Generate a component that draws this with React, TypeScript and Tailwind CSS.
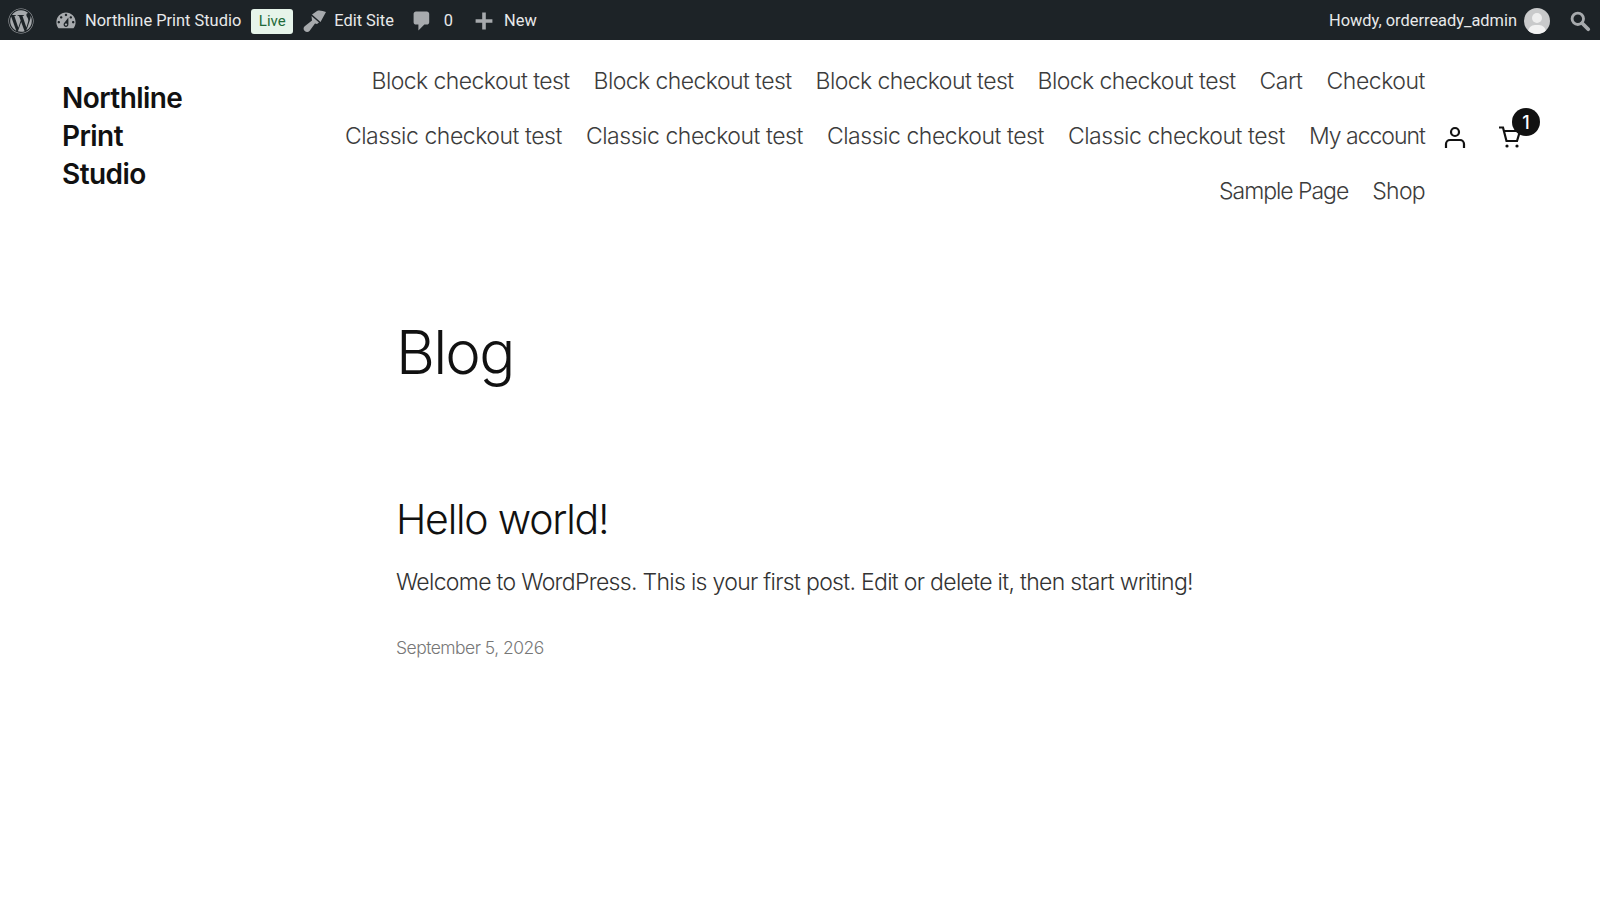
import { FaWordpress } from "react-icons/fa";

const navLinks = [
  { label: "Block checkout test", cls: "tracking-[-0.025em]" },
  { label: "Block checkout test", cls: "tracking-[-0.025em]" },
  { label: "Block checkout test", cls: "tracking-[-0.025em]" },
  { label: "Block checkout test", cls: "tracking-[-0.025em]" },
  { label: "Cart", cls: "tracking-[-0.02em]" },
  { label: "Checkout", cls: "tracking-[-0.02em]" },
  { label: "Classic checkout test", cls: "tracking-[-0.02em]" },
  { label: "Classic checkout test", cls: "tracking-[-0.02em]" },
  { label: "Classic checkout test", cls: "tracking-[-0.02em]" },
  { label: "Classic checkout test", cls: "tracking-[-0.02em]" },
  { label: "My account", cls: "tracking-[-0.043em]" },
  { label: "Sample Page", cls: "tracking-[-0.045em]" },
  { label: "Shop", cls: "tracking-[-0.03em]" },
];

const AdminBar = () => (
  <div className="flex h-10 items-center justify-between bg-[#1d2327] pt-[2px] font-['Roboto',sans-serif] text-[16.4px] text-[#e8e9ea]">
    <div className="flex items-center">
      <FaWordpress className="ml-2 h-[26px] w-[26px] text-[#a7aaad]" />
      <svg viewBox="0 0 20 20" className="ml-5 h-6 w-6 fill-[#a7aaad]">
        <path
          fillRule="evenodd"
          d="M3.76 16h12.48c1.1-1.37 1.76-3.11 1.76-5 0-4.42-3.58-8-8-8s-8 3.58-8 8c0 1.89.66 3.63 1.76 5zM10 4c.55 0 1 .45 1 1s-.45 1-1 1-1-.45-1-1 .45-1 1-1zM6 6c.55 0 1 .45 1 1s-.45 1-1 1-1-.45-1-1 .45-1 1-1zm8 0c.55 0 1 .45 1 1s-.45 1-1 1-1-.45-1-1 .45-1 1-1zm-5.37 5.55L12 7v6c0 1.1-.9 2-2 2s-2-.9-2-2c0-.57.24-1.08.63-1.45zM4 10c.55 0 1 .45 1 1s-.45 1-1 1-1-.45-1-1 .45-1 1-1zm12 0c.55 0 1 .45 1 1s-.45 1-1 1-1-.45-1-1 .45-1 1-1zm-5 3c0-.55-.45-1-1-1s-1 .45-1 1 .45 1 1 1 1-.45 1-1z"
        />
      </svg>
      <span className="ml-[7px]">Northline Print Studio</span>
      <span className="ml-[10px] flex h-[25px] w-[42px] items-center justify-center rounded-[3px] bg-[#e6f4ea] text-[15px] text-[#1e6b3a]">
        Live
      </span>
      {/* brush */}
      <svg viewBox="0 0 24 24" className="ml-[9px] h-6 w-6 fill-[#a7aaad]">
        <path d="M10 5.500 15 2c3-1.200 6 .4 9 1l-5.500 10z" />
        <path d="M9.500 7 17 13.500l-2 1.500-2-.5-5.500 7.500c-1.500 1.500-3.500 1.200-5-.2-1.200-1.400-1.300-3.300.2-4.500L10 11.500z" />
      </svg>
      <span className="ml-2">Edit Site</span>
      <svg viewBox="0 0 20 20" className="ml-[16px] h-6 w-6 fill-[#a7aaad]">
        <path d="M5 2h9c1.100 0 2 .9 2 2v7c0 1.100-.9 2-2 2h-2l-5 5v-5H5c-1.100 0-2-.9-2-2V4c0-1.100.9-2 2-2z" />
      </svg>
      <span className="ml-[10px]">0</span>
      <svg viewBox="0 0 20 20" className="ml-[19px] h-6 w-6 fill-[#a7aaad]">
        <path d="M17 8.500v3h-5.500V17h-3v-5.500H3v-3h5.500V3h3v5.500z" />
      </svg>
      <span className="ml-2">New</span>
    </div>
    <div className="flex items-center">
      <span>Howdy, orderready_admin</span>
      <span className="relative ml-[7px] h-[26px] w-[26px] overflow-hidden rounded-full bg-[#c9cacb]">
        <span className="absolute left-[8px] top-[5px] h-[10px] w-[10px] rounded-full bg-[#eeeeee]" />
        <span className="absolute left-[4px] top-[17px] h-[14px] w-[18px] rounded-full bg-[#f2f2f2]" />
      </span>
      <svg viewBox="0 0 20 20" className="ml-[19px] mr-[9px] h-[22px] w-[22px] fill-none stroke-[#a7aaad]">
        <circle cx="8" cy="8" r="5.200" strokeWidth="2.600" />
        <path d="m12 12 5.500 5.500" strokeWidth="3.400" strokeLinecap="round" />
      </svg>
    </div>
  </div>
);

const Header = () => (
  <header className="flex items-start pl-[62px] pt-[14px] font-['Inter',sans-serif]">
    <div className="mt-[25px] w-[130px] text-[28px] font-semibold leading-[38px] tracking-[-0.02em] text-[#111]">
      Northline Print Studio
    </div>
    <nav className="ml-[133px] flex w-[1100px] flex-wrap justify-end gap-x-[24px] text-[23px] font-light text-[#3c3c3c]">
      {navLinks.map((link, i) => (
        <a key={i} className={`flex h-[55px] items-center ${link.cls}`}>
          {link.label}
        </a>
      ))}
    </nav>
    <div className="relative ml-[18px] mt-[55px] flex h-[55px] items-center text-[#111]">
      <svg viewBox="0 0 24 24" className="h-6 w-6 fill-none stroke-current" strokeWidth={2.200}>
        <circle cx="12" cy="7" r="4" />
        <path d="M3 23v-4a4 4 0 0 1 4-4h10a4 4 0 0 1 4 4v4" />
      </svg>
      <svg viewBox="0 0 24 24" className="ml-[31px] h-6 w-6 fill-none stroke-current" strokeWidth={2.200}>
        <path d="M1 2.500h4l3.500 13.500H19l3-10H6" />
        <circle cx="9" cy="21" r="1.600" className="fill-current stroke-none" />
        <circle cx="19" cy="21" r="1.600" className="fill-current stroke-none" />
      </svg>
      <span className="absolute left-[69px] top-[-1px] flex h-7 w-7 items-center justify-center rounded-full bg-[#111] text-[18px] font-medium text-white">
        1
      </span>
    </div>
  </header>
);

export default function App() {
  return (
    <div className="min-h-[900px] bg-white">
      <AdminBar />
      <Header />
      <main className="ml-[396px] w-[806px] pt-[99px] font-['Inter',sans-serif]">
        <h1 className="text-[60px] font-light leading-[68px] tracking-[-0.03em] text-[#111]">Blog</h1>
        <h2 className="mt-[109px] text-[41px] font-light leading-[48px] tracking-[-0.03em] text-[#111]">
          Hello world!
        </h2>
        <p className="mt-[23px] text-[23px] font-light leading-[32px] tracking-[-0.03em] text-[#333]">
          Welcome to WordPress. This is your first post. Edit or delete it, then start writing!
        </p>
        <p className="mt-[37px] text-[17.500px] font-light leading-[26px] tracking-[-0.03em] text-[#777]">
          September 5, 2026
        </p>
      </main>
    </div>
  );
}
